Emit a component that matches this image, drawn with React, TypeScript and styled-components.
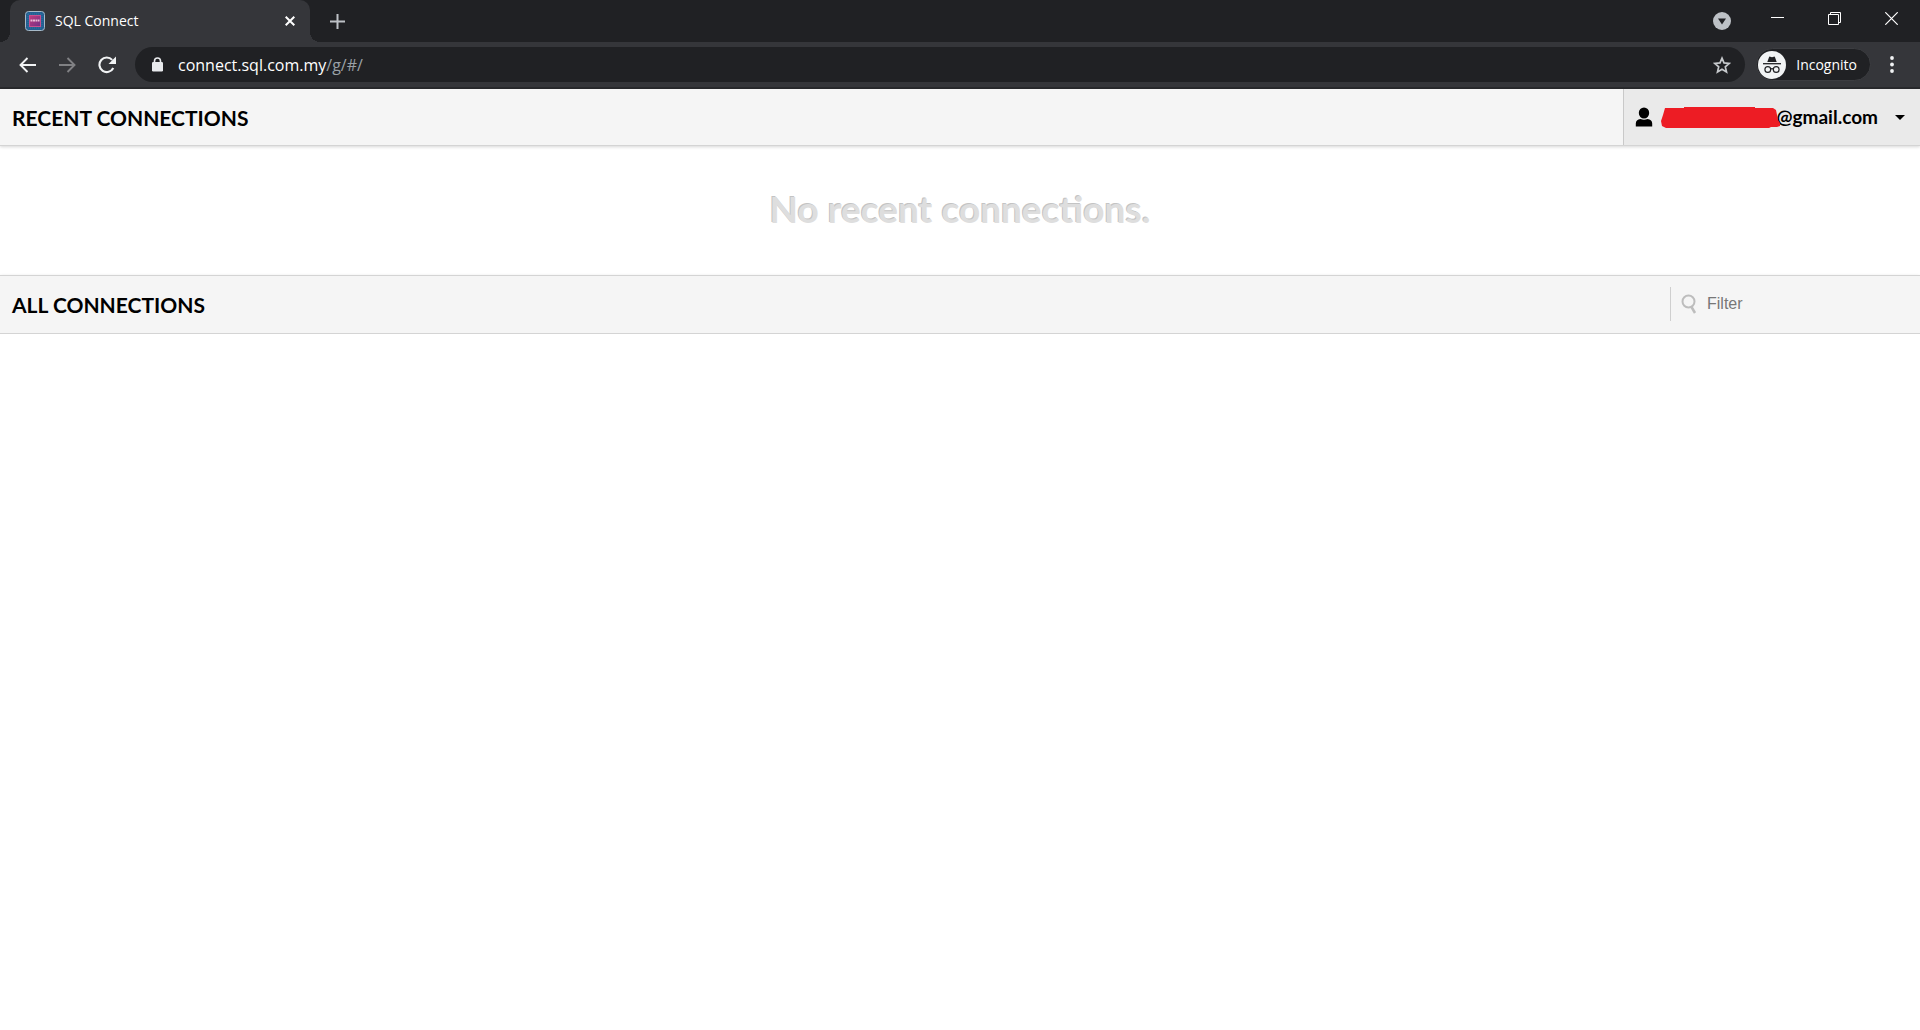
import React from "react";
import styled, { createGlobalStyle } from "styled-components";

const uiFont = `"Open Sans", "Noto Sans", sans-serif`;
const pageFont = `Lato, sans-serif`;

const Global = createGlobalStyle`
  *, *::before, *::after { box-sizing: border-box; }
  body { margin: 0; background: #fff; font-family: ${pageFont}; }
  button { border: 0; padding: 0; margin: 0; background: none; font: inherit; color: inherit; }
  svg { display: block; flex: none; }
  h1, h2, p { margin: 0; }
`;

const TabStrip = styled.div`
  display: flex;
  height: 42px;
  padding-left: 10px;
  background: #202124;
`;

const Tab = styled.div`
  position: relative;
  display: flex;
  align-items: center;
  width: 300px;
  padding: 0 14px 0 15px;
  border-radius: 10px 10px 0 0;
  background: #35363a;
  color: #fff;
  font: 14px/20px ${uiFont};
  &::before, &::after {
    content: "";
    position: absolute;
    bottom: 0;
    width: 10px;
    height: 10px;
  }
  &::before {
    right: 100%;
    background: radial-gradient(circle at 0 0, #202124 10px, #35363a 10px);
  }
  &::after {
    left: 100%;
    background: radial-gradient(circle at 100% 0, #202124 10px, #35363a 10px);
  }
`;

const TabTitle = styled.span`
  flex: 1;
  padding-left: 10px;
`;

const IconButton = styled.button<{ $width: number; $height?: number }>`
  display: flex;
  flex: none;
  align-items: center;
  justify-content: center;
  width: ${(p) => p.$width}px;
  height: ${(p) => p.$height ?? 34}px;
`;

const WindowControls = styled.div`
  display: flex;
  margin-left: auto;
`;

const Toolbar = styled.div`
  display: flex;
  align-items: center;
  height: 47px;
  padding: 0 7px 0 7px;
  border-bottom: 2px solid #292a2d;
  background: #35363a;
`;

const AddressBar = styled.div`
  display: flex;
  flex: 1;
  align-items: center;
  height: 35px;
  margin-left: 8px;
  padding: 0 3px 0 16px;
  border-radius: 18px;
  background: #202124;
`;

const AddressText = styled.a`
  flex: 1;
  padding-left: 14px;
  color: #9aa0a6;
  font: 16px/24px ${uiFont};
  text-decoration: none;
`;

const Host = styled.span`
  color: #fff;
`;

const IncognitoChip = styled.button`
  display: flex;
  align-items: center;
  gap: 10px;
  height: 33px;
  margin-left: 11px;
  padding: 0 13px 0 1px;
  border: 1px solid #3c3d41;
  border-radius: 17px;
  background: #202124;
  color: #fff;
  font: 14px/20px ${uiFont};
`;

const SectionBar = styled.header<{ $topLine?: boolean }>`
  display: flex;
  align-items: stretch;
  justify-content: space-between;
  height: ${(p) => (p.$topLine ? 59 : 57)}px;
  padding: 0 0 ${(p) => (p.$topLine ? 2 : 0)}px 12px;
  border-top: ${(p) => (p.$topLine ? "1px solid #d4d4d4" : "0")};
  border-bottom: 1px solid #d4d4d4;
  background: #f5f5f5;
  box-shadow: 0 1px 3px rgba(0, 0, 0, 0.16);
`;

const SectionTitle = styled.h2`
  align-self: center;
  padding-top: 2px;
  color: #000;
  font: bold 21px/28px ${pageFont};
`;

const UserMenu = styled.button`
  display: flex;
  align-items: center;
  padding: 0 15px 0 11px;
  border-left: 1px solid #c9c9c9;
  background: #eaeaea;
  color: #000;
  font: bold 19px/24px ${pageFont};
`;

const Redaction = styled.svg`
  position: relative;
  margin: 1px -4px 0 8px;
`;

const Caret = styled.span`
  margin-left: 17px;
  border: 5px solid transparent;
  border-top-color: #000;
  border-bottom: 0;
`;

const EmptyState = styled.main`
  padding: 39px 16px 42px;
  text-align: center;
`;

const EmptyText = styled.p`
  color: #dedede;
  font: bold 37px/48px ${pageFont};
  text-shadow: -1px -1px 0 #c4c4c4;
`;

const FilterBox = styled.label`
  display: flex;
  align-items: center;
  align-self: center;
  width: 250px;
  height: 34px;
  padding-left: 10px;
  border-left: 1px solid #cfcfcf;
`;

const FilterInput = styled.input`
  flex: 1;
  min-width: 0;
  padding: 0 10px;
  border: 0;
  outline: 0;
  background: transparent;
  color: #333;
  font: 16px/20px "Liberation Sans", Arial, sans-serif;
  &::placeholder { color: #777; opacity: 1; }
`;

function Favicon() {
  return (
    <svg width="20" height="20" viewBox="0 0 20 20">
      <defs>
        <linearGradient id="chip" x1="0" y1="0" x2="1" y2="1">
          <stop offset="0" stopColor="#c23c7d" />
          <stop offset="1" stopColor="#713087" />
        </linearGradient>
      </defs>
      <rect x=".5" y=".5" width="19" height="19" rx="3" fill="#245f91" stroke="#a7bac8" />
      <path d="M3 3h14M3 17h14M3 3v14M17 3v14" stroke="#2f74a3" strokeDasharray="1 1" />
      <rect x="4.5" y="4.5" width="11" height="11" fill="url(#chip)" stroke="#c9508f" />
      <path d="M5.500 9.500h9" stroke="#e8bcd6" strokeWidth="2" strokeDasharray="2 .5" />
    </svg>
  );
}

function IncognitoIcon() {
  return (
    <svg width="28" height="28" viewBox="0 0 28 28">
      <circle cx="14" cy="14" r="14" fill="#f1f3f4" />
      <path d="M9.3 11 11 6.2q.3-.8 1.2-.5l1.8.5 1.8-.5q.9-.3 1.2.5L18.700 11z" fill="#202124" />
      <path d="M5 12.700h18" stroke="#202124" strokeWidth="1.300" />
      <g fill="none" stroke="#202124" strokeWidth="1.200">
        <circle cx="9.800" cy="18.500" r="2.900" />
        <circle cx="18.200" cy="18.500" r="2.900" />
        <path d="M12.700 18q1.300-.8 2.600 0" />
      </g>
    </svg>
  );
}

export default function App() {
  return (
    <>
      <Global />
      <TabStrip>
        <Tab>
          <Favicon />
          <TabTitle>SQL Connect</TabTitle>
          <IconButton $width={12} $height={20} aria-label="Close tab">
            <svg width="10" height="10" viewBox="0 0 10 10" stroke="#fff" strokeWidth="2">
              <path d="M.7.7l8.600 8.600M9.300.7L.7 9.300" />
            </svg>
          </IconButton>
        </Tab>
        <IconButton $width={54} $height={42} aria-label="New tab">
          <svg width="15" height="15" viewBox="0 0 15 15" stroke="#bdc1c6" strokeWidth="2">
            <path d="M7.500 0v15M0 7.500h15" />
          </svg>
        </IconButton>
        <WindowControls>
          <IconButton $width={54} $height={42} aria-label="Search tabs">
            <svg width="18" height="18" viewBox="0 0 18 18">
              <circle cx="9" cy="9" r="9" fill="#bdc1c6" />
              <path d="M5 6.500h8L9 12.500z" fill="#202124" />
            </svg>
          </IconButton>
          <IconButton $width={57} $height={37} aria-label="Minimize">
            <svg width="13" height="13" viewBox="0 0 13 13" stroke="#fff">
              <path d="M0 5.500h13" />
            </svg>
          </IconButton>
          <IconButton $width={57} $height={37} aria-label="Restore">
            <svg width="13" height="13" viewBox="0 0 13 13" fill="none" stroke="#fff">
              <path d="M.5 2.500h10v10H.5zM2.500 2.500v-2h10v10h-2" />
            </svg>
          </IconButton>
          <IconButton $width={57} $height={37} aria-label="Close window">
            <svg width="13" height="13" viewBox="0 0 13 13" stroke="#fff" strokeWidth="1.200">
              <path d="M.3.3l12.400 12.400M12.700.3L.3 12.700" />
            </svg>
          </IconButton>
        </WindowControls>
      </TabStrip>

      <Toolbar>
        <IconButton $width={40} aria-label="Back">
          <svg width="17" height="16" viewBox="0 0 17 16" fill="none" stroke="#f1f3f4" strokeWidth="1.900">
            <path d="M17 8H1.500M8.500 1l-7 7 7 7" />
          </svg>
        </IconButton>
        <IconButton $width={40} aria-label="Forward" disabled>
          <svg width="17" height="16" viewBox="0 0 17 16" fill="none" stroke="#808184" strokeWidth="1.900">
            <path d="M0 8h15.500M8.500 1l7 7-7 7" />
          </svg>
        </IconButton>
        <IconButton $width={40} aria-label="Reload">
          <svg width="18" height="18" viewBox="0 0 18 18">
            <path d="M15.300 12A7.300 7.300 0 1 1 14.200 3.900" fill="none" stroke="#f1f3f4" strokeWidth="2.100" />
            <path d="M18 .5V8h-7.500z" fill="#f1f3f4" />
          </svg>
        </IconButton>
        <AddressBar>
          <svg width="13" height="15" viewBox="0 0 13 15">
            <rect x="1" y="5" width="11" height="9.500" rx="1.200" fill="#e8eaed" />
            <path d="M3.500 6V4a3 3 0 0 1 6 0v2" fill="none" stroke="#e8eaed" strokeWidth="1.600" />
          </svg>
          <AddressText href="#/">
            <Host>connect.sql.com.my</Host>/g/#/
          </AddressText>
          <IconButton $width={40} aria-label="Bookmark this page">
            <svg width="18" height="18" viewBox="0 0 18 18" fill="none" stroke="#c6c9cc" strokeWidth="1.700">
              <path d="M9 2.200l2 4.700 5.200.5-3.900 3.400 1.200 5.100L9 13.200l-4.500 2.700 1.200-5.100L1.800 7.400 7 6.900z" />
            </svg>
          </IconButton>
        </AddressBar>
        <IncognitoChip>
          <IncognitoIcon />
          Incognito
        </IncognitoChip>
        <IconButton $width={42} aria-label="Browser menu">
          <svg width="4" height="17" viewBox="0 0 4 17" fill="#f1f3f4">
            <circle cx="2" cy="2" r="1.900" />
            <circle cx="2" cy="8.500" r="1.900" />
            <circle cx="2" cy="15" r="1.900" />
          </svg>
        </IconButton>
      </Toolbar>

      <SectionBar>
        <SectionTitle>RECENT CONNECTIONS</SectionTitle>
        <UserMenu>
          <svg width="18" height="20" viewBox="0 0 18 20">
            <ellipse cx="9" cy="6" rx="5.200" ry="5.500" />
            <path d="M.8 19.500v-3q0-4 4.700-4.500 3.500 1.600 7 0 4.700.5 4.700 4.500v3z" />
          </svg>
          <Redaction width="120" height="22" viewBox="0 0 120 22">
            <path
              d="M4 1H23V0H94V1H112L115 3 117 13 119 16 119 19 116 20H110L108 21H5L1 19 0 14 2 8Z"
              fill="#ed1c24"
            />
          </Redaction>
          @gmail.com
          <Caret />
        </UserMenu>
      </SectionBar>

      <EmptyState>
        <EmptyText>No recent connections.</EmptyText>
      </EmptyState>

      <SectionBar $topLine>
        <SectionTitle>ALL CONNECTIONS</SectionTitle>
        <FilterBox>
          <svg width="16" height="20" viewBox="0 0 16 20" fill="none" stroke="#bdbdbd">
            <circle cx="7.500" cy="7.500" r="6" strokeWidth="2" />
            <path d="M10.500 13l3.500 6" strokeWidth="2.500" />
          </svg>
          <FilterInput type="text" placeholder="Filter" aria-label="Filter" />
        </FilterBox>
      </SectionBar>
    </>
  );
}
